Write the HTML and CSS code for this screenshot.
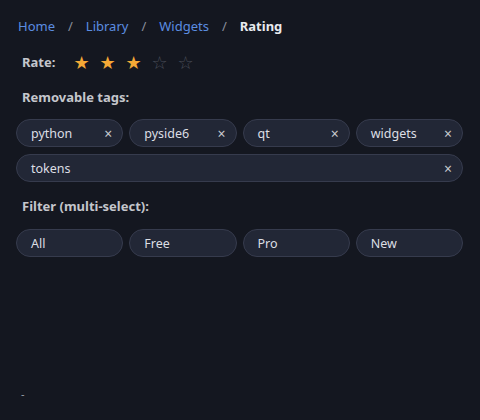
FILE: index.html
```html
<!DOCTYPE html>
<html lang="en">
<head>
<meta charset="utf-8">
<link rel="stylesheet" href="styles.css">
</head>
<body>
<div class="page">
  <nav class="crumbs">
    <a class="crumb">Home</a><span class="sep">/</span>
    <a class="crumb">Library</a><span class="sep">/</span>
    <a class="crumb">Widgets</a><span class="sep">/</span>
    <span class="crumb current">Rating</span>
  </nav>
  <div class="rate-row">
    <span class="label">Rate:</span>
    <div class="stars">
      <span class="star on">★</span>
      <span class="star on">★</span>
      <span class="star on">★</span>
      <span class="star off">☆</span>
      <span class="star off">☆</span>
    </div>
  </div>
  <div class="label section">Removable tags:</div>
  <div class="chips">
    <div class="chip"><span>python</span><span class="x">×</span></div>
    <div class="chip"><span>pyside6</span><span class="x">×</span></div>
    <div class="chip"><span>qt</span><span class="x">×</span></div>
    <div class="chip"><span>widgets</span><span class="x">×</span></div>
    <div class="chip wide"><span>tokens</span><span class="x">×</span></div>
  </div>
  <div class="label section">Filter (multi-select):</div>
  <div class="chips">
    <div class="chip"><span>All</span></div>
    <div class="chip"><span>Free</span></div>
    <div class="chip"><span>Pro</span></div>
    <div class="chip"><span>New</span></div>
  </div>
  <div class="status">-</div>
</div>
</body>
</html>
```
FILE: styles.css
```css
html, body {
  margin: 0;
  padding: 0;
  background: #141720;
}
body {
  font-family: "Noto Sans", "Open Sans", sans-serif;
  font-size: 13px;
  color: #dfe1e6;
}
.page {
  box-sizing: border-box;
  min-height: 420px;
  display: flex;
  flex-direction: column;
  padding: 16px 17px 19px 16px;
}
.crumbs {
  display: flex;
  align-items: center;
  padding-left: 2px;
  height: 20px;
}
.crumb {
  color: #5b8de0;
}
.sep {
  color: #8a8f9c;
  padding: 0 13px;
}
.current {
  color: #e8eaee;
  font-weight: bold;
}
.rate-row {
  display: flex;
  align-items: center;
  margin-top: 16px;
  padding-left: 6px;
  height: 20px;
}
.label {
  color: #c4c6cc;
  font-weight: bold;
}
.stars {
  display: flex;
  margin-left: 18px;
  gap: 10px;
}
.star {
  font-size: 18px;
  width: 16px;
  text-align: center;
  font-family: "DejaVu Sans", sans-serif;
}
.on { color: #f4a836; }
.off { color: #4a4e59; }
.section {
  padding-left: 6px;
  margin-top: 15px;
  height: 20px;
  line-height: 20px;
}
.chips + .section {
  margin-top: 14px;
}
.chips {
  display: grid;
  grid-template-columns: repeat(4, 1fr);
  gap: 7px 6px;
  margin-top: 12px;
}
.chips + .section + .chips {
  margin-top: 13px;
}
.chip {
  box-sizing: border-box;
  height: 28px;
  border: 1px solid #363b4d;
  border-radius: 14px;
  background: #222736;
  display: flex;
  align-items: center;
  justify-content: space-between;
  padding: 0 10px 0 14px;
  color: #dcdee4;
  font-size: 12.5px;
}
.chip.wide {
  grid-column: 1 / -1;
}
.x {
  color: #c8cad0;
  font-size: 14px;
}
.status {
  margin-top: auto;
  padding-left: 5px;
  color: #9a9ea8;
  font-size: 11px;
}
```
